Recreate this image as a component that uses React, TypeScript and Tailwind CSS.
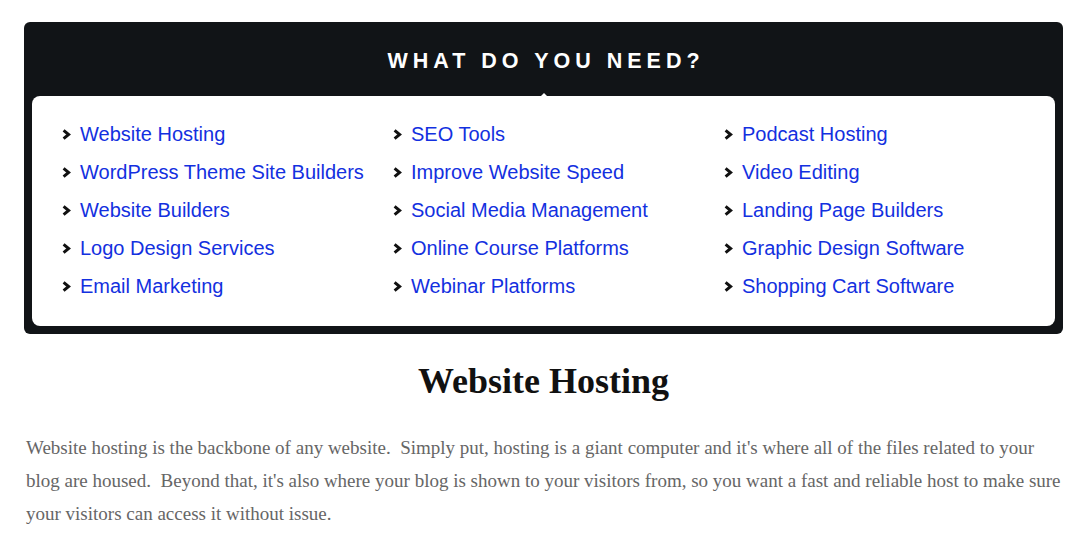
import React from "react";

const cols = [
  ["Website Hosting", "WordPress Theme Site Builders", "Website Builders", "Logo Design Services", "Email Marketing"],
  ["SEO Tools", "Improve Website Speed", "Social Media Management", "Online Course Platforms", "Webinar Platforms"],
  ["Podcast Hosting", "Video Editing", "Landing Page Builders", "Graphic Design Software", "Shopping Cart Software"],
];

function Chevron() {
  return (
    <svg width="9" height="11" viewBox="0 0 9 11" className="shrink-0">
      <path d="M1.6 1.4 L6.6 5.5 L1.6 9.6" fill="none" stroke="#111" strokeWidth="3" strokeLinejoin="miter" />
    </svg>
  );
}

export default function App() {
  return (
    <div className="bg-white min-h-[544px] pt-[22px] pl-[24px] pr-[26px]" style={{ fontFamily: '"Liberation Sans", Arial, sans-serif' }}>
      <div className="bg-[#111417] rounded-[6px] px-[8px] pb-[8px]">
        <div className="h-[74px] flex items-center justify-center">
          <h2 className="text-white font-bold text-[21.5px] tracking-[5px] pl-[5px] mt-[4px]">WHAT DO YOU NEED?</h2>
        </div>
        <div className="relative bg-white rounded-[8px] pl-[30px] pt-[19px] pb-[21px] grid grid-cols-[331px_331px_1fr]">
          <div className="absolute left-[508px] -top-[3px] w-0 h-0 border-l-[4px] border-r-[4px] border-b-[4px] border-l-transparent border-r-transparent border-b-white" />
          {cols.map((col, i) => (
            <div key={i} className="flex flex-col">
              {col.map((item) => (
                <div key={item} className="h-[38px] flex items-center gap-[9px]">
                  <Chevron />
                  <a className="text-[#1330e0] text-[20px] leading-none" href="#">{item}</a>
                </div>
              ))}
            </div>
          ))}
        </div>
      </div>
      <h1 className="text-center text-[#111] font-bold text-[36px] mt-[25px] leading-[44px]" style={{ fontFamily: '"Liberation Serif", "Times New Roman", serif' }}>
        Website Hosting
      </h1>
      <p className="text-[#666] text-[19px] leading-[33px] mt-[28px] pl-[2px] w-[1044px]" style={{ fontFamily: '"Liberation Serif", "Times New Roman", serif' }}>
        Website hosting is the backbone of any website.{"\u00a0 "}Simply put, hosting is a giant computer and it's where all of the files related to your blog are housed.{"\u00a0 "}Beyond that, it's also where your blog is shown to your visitors from, so you want a fast and reliable host to make sure your visitors can access it without issue.
      </p>
    </div>
  );
}
